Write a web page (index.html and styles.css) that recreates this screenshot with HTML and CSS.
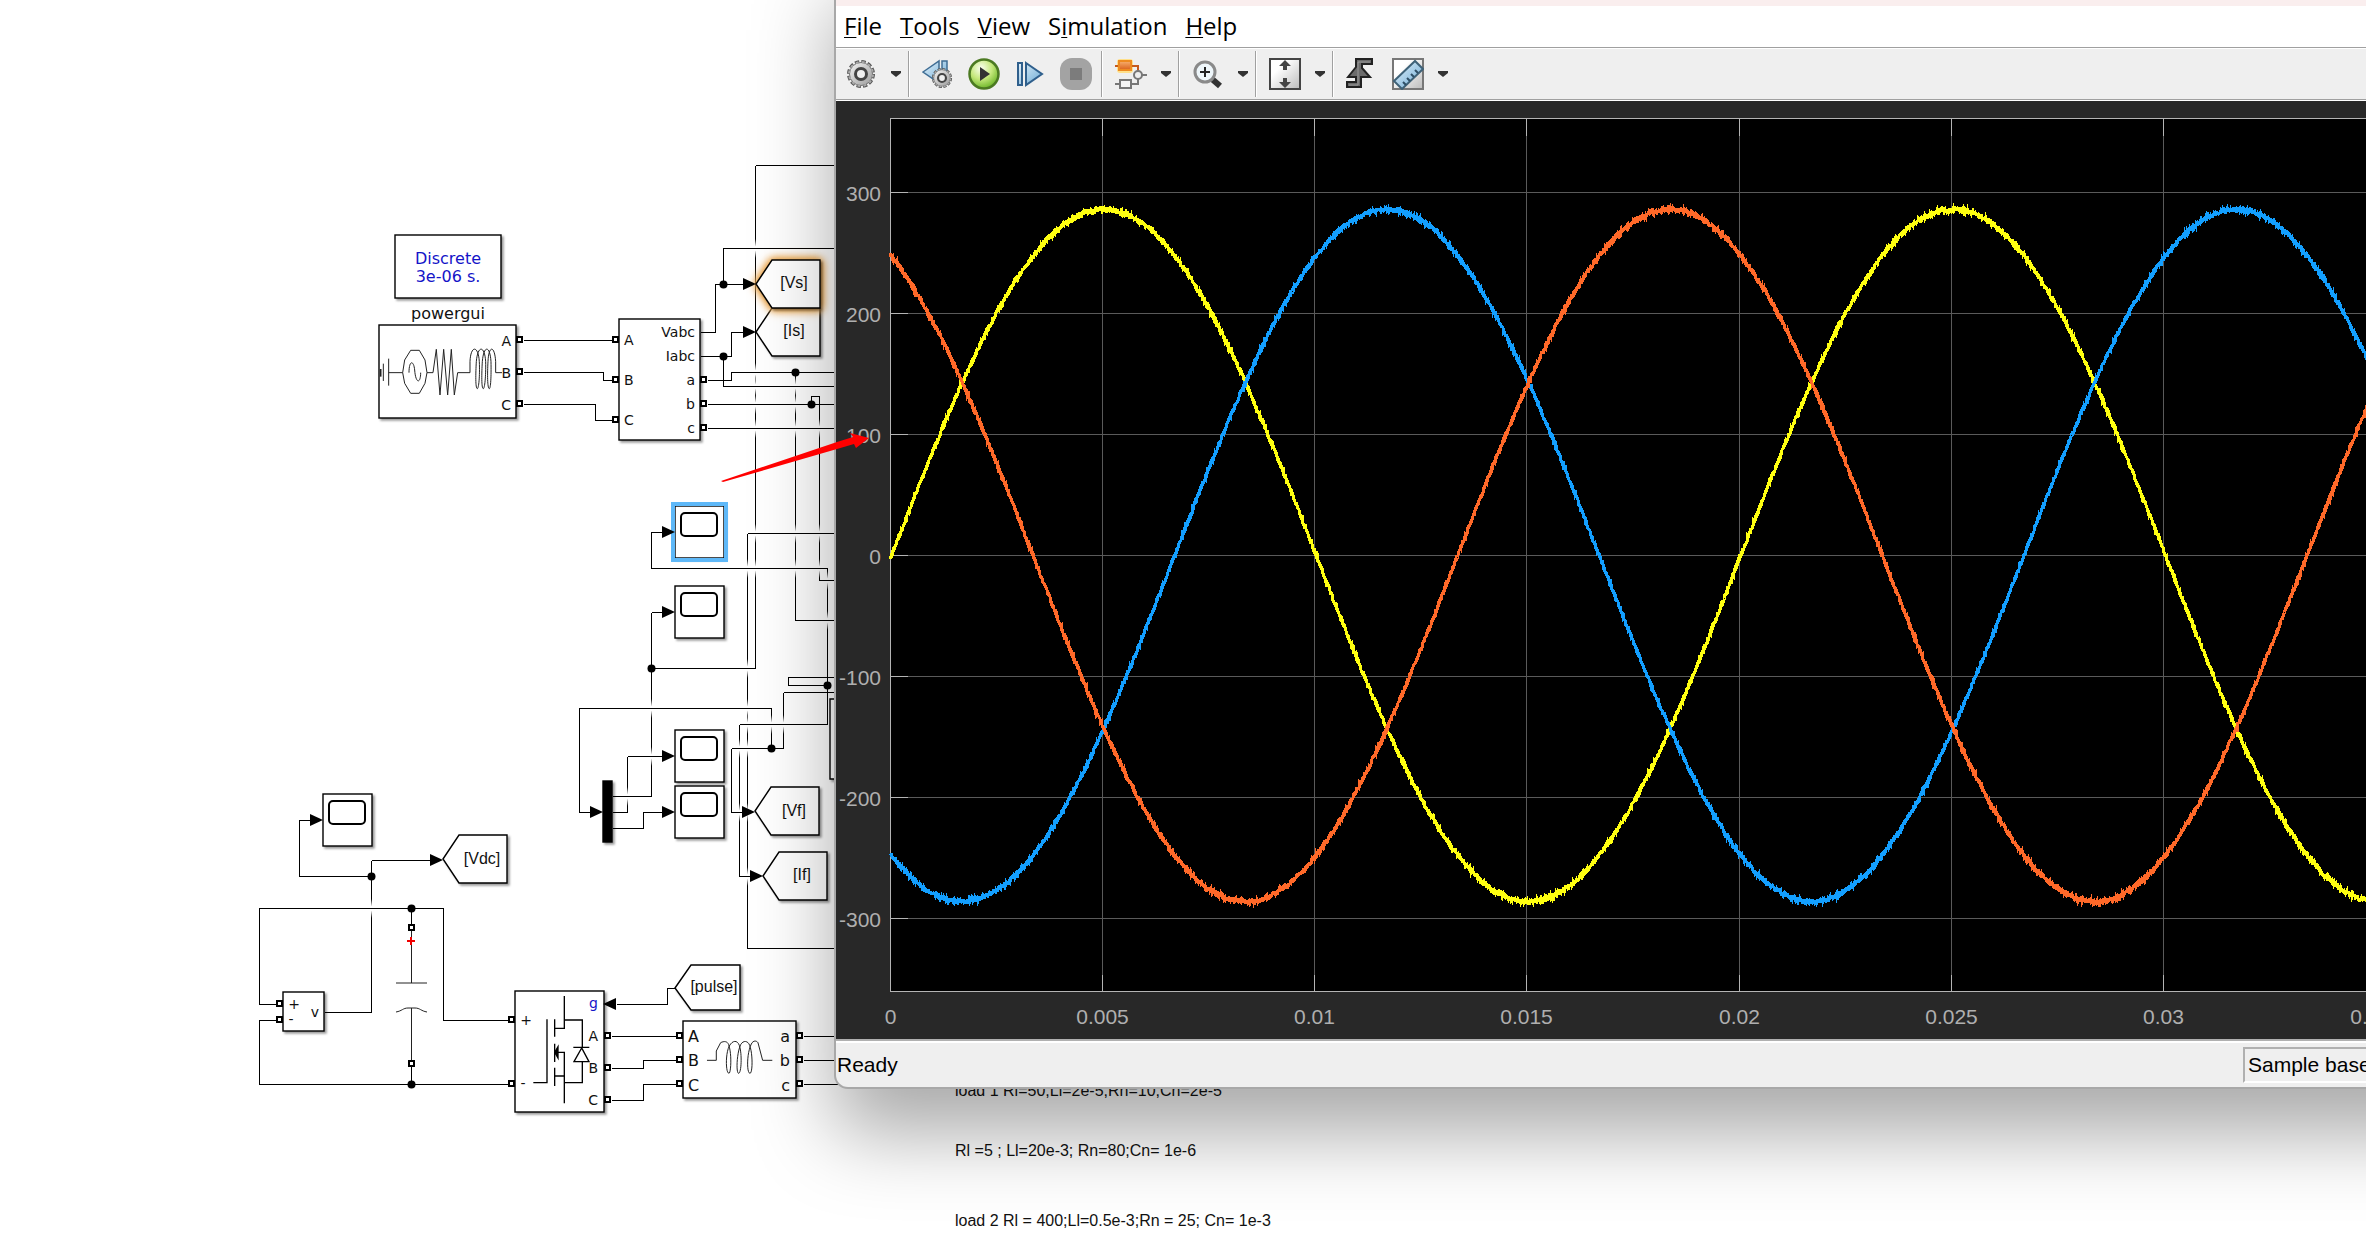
FILE: index.html
```html
<!DOCTYPE html>
<html lang="en">
<head>
    <meta charset="UTF-8">
    <meta name="viewport" content="width=device-width, initial-scale=1.0">
    <title>Scope</title>
    <link rel="stylesheet" href="styles.css">
</head>
<body>
    <main class="model">
        <svg class="diagram" role="img" aria-label="Inverter model">
            <defs>
                <linearGradient id="fade" x1="0" y1="0" x2="0" y2="1">
                    <stop offset="0" stop-color="#fff" stop-opacity="0"/>
                    <stop offset=".4" stop-color="#fff"/>
                    <stop offset=".6" stop-color="#fff"/>
                    <stop offset="1" stop-color="#fff" stop-opacity="0"/>
                </linearGradient>
                <rect id="gap" x="-1" y="-9" width="3" height="19" fill="url(#fade)"/>
                <rect id="port" x="-2.5" y="-2.5" width="5" height="5" class="port"/>
                <circle id="node" r="4"/>
                <path id="arrow" d="M0 0L-13 -6V6Z"/>
                <path id="tag" class="block" d="M0 0L16 -24H64V24H16Z"/>
                <g id="scope">
                    <rect class="block" width="49" height="52"/>
                    <rect class="screen" x="6" y="7" width="36" height="23" rx="4"/>
                </g>
            </defs>

            <!-- vertical runs of the wires -->
            <g class="wire">
                <path d="M755 165V668M747 533V948M795 372V620M819 396V580M827 568V724M739 724V876M783 692V748M771 708V748M731 748V812M651 612V796M627 756V812M371 860V1012"/>
            </g>
            <g>
                <use href="#gap" x="755" y="248"/><use href="#gap" x="755" y="372"/><use href="#gap" x="755" y="386"/>
                <use href="#gap" x="755" y="404"/><use href="#gap" x="755" y="428"/><use href="#gap" x="755" y="533"/>
                <use href="#gap" x="755" y="568"/><use href="#gap" x="747" y="568"/><use href="#gap" x="747" y="668"/>
                <use href="#gap" x="747" y="708"/><use href="#gap" x="747" y="724"/><use href="#gap" x="747" y="748"/>
                <use href="#gap" x="747" y="812"/><use href="#gap" x="747" y="876"/><use href="#gap" x="795" y="386"/>
                <use href="#gap" x="795" y="404"/><use href="#gap" x="795" y="428"/><use href="#gap" x="795" y="533"/>
                <use href="#gap" x="795" y="568"/><use href="#gap" x="819" y="428"/><use href="#gap" x="819" y="533"/>
                <use href="#gap" x="819" y="568"/><use href="#gap" x="827" y="580"/><use href="#gap" x="827" y="620"/>
                <use href="#gap" x="783" y="724"/><use href="#gap" x="771" y="724"/><use href="#gap" x="739" y="748"/>
                <use href="#gap" x="739" y="812"/><use href="#gap" x="651" y="708"/><use href="#gap" x="651" y="756"/>
                <use href="#gap" x="627" y="796"/><use href="#gap" x="371" y="908"/>
            </g>

            <!-- the rest of the wires -->
            <g class="wire">
                <path d="M523 340H612M523 372H603V380H612M523 404H595V420H612"/>
                <path d="M700 332H715V284H745M723 284V248H836M700 356H731V332H745M723 356V386H836"/>
                <path d="M707 380H731V372H836M707 404H836M811 404V396H819M707 428H836"/>
                <path d="M755 165H836M651 668H755M747 533H836M795 620H836M819 580H836M747 948H836"/>
                <path d="M664 532H651V568H827M664 612H651M836 677H788V685H827M836 692H783"/>
                <path d="M827 724H739M739 876H752M783 748H731M731 812H744M771 708H579V812H592"/>
                <path d="M612 796H651M612 812H627M627 756H664M612 828H643V812H664"/>
                <path d="M312 820H299V876H371M371 860H432M371 1012H324"/>
                <path d="M276 1004H259V908H443V1020H508M276 1020H259V1084H508M411 908V924M411 1066V1084"/>
                <path d="M611 1036H676M611 1068H643V1060H676M611 1100H643V1084H676M616 1004H667V988H675"/>
                <path d="M803 1036H836M803 1060H836M803 1084H844"/>
            </g>

            <!-- solver and three-phase source -->
            <rect class="block" x="395" y="235" width="106" height="63"/>
            <text class="label label-big blue middle" x="448" y="264">Discrete</text>
            <text class="label label-big blue middle" x="448" y="282">3e-06 s.</text>
            <text class="label label-big middle" x="448" y="319">powergui</text>
            <rect class="block" x="379" y="325" width="137" height="93"/>
            <g class="art" transform="translate(360 220) scale(.3333)">
                <path d="M62 447V470" stroke-width="5"/>
                <path d="M70 431V483M86 416V497M86 458H128L134 420L152 391H178L195 420L201 458L195 490L178 520H152L134 490L128 458"/>
                <path d="M147 458C147 420 161 420 164 450C167 492 182 492 182 458"/>
                <path d="M201 458H219L229 388L240 525L251 388L263 525L274 388L283 525L293 458H330V425C332 375 355 375 358 425C360 470 356 506 352 506C346 506 347 460 349 425C353 375 374 375 377 425C378 470 374 506 370 506C364 506 365 460 367 425C371 375 390 375 393 425C394 470 392 506 388 506C382 506 382 460 384 425C386 375 404 375 407 425V458H426"/>
            </g>
            <g class="label end">
                <text x="511" y="346">A</text><text x="511" y="378">B</text><text x="511" y="410">C</text>
            </g>

            <!-- measurement -->
            <rect class="block" x="619" y="319" width="81" height="121"/>
            <g class="label">
                <text x="624" y="345">A</text><text x="624" y="385">B</text><text x="624" y="425">C</text>
            </g>
            <g class="label end">
                <text x="695" y="337">Vabc</text><text x="695" y="361">Iabc</text>
                <text x="695" y="385">a</text><text x="695" y="409">b</text><text x="695" y="433">c</text>
            </g>

            <!-- goto tags -->
            <use href="#tag" x="756" y="332"/>
            <use href="#tag" class="glow" x="756" y="284"/>
            <use href="#tag" x="755" y="811"/>
            <use href="#tag" x="763" y="876"/>
            <use href="#tag" x="443" y="859"/>
            <path class="block" d="M675 988L691 965H740V1010H691Z"/>
            <g class="tag-text middle">
                <text x="794" y="288">[Vs]</text><text x="794" y="336">[Is]</text><text x="794" y="816">[Vf]</text>
                <text x="802" y="880">[If]</text><text x="482" y="864">[Vdc]</text><text x="714" y="992">[pulse]</text>
            </g>

            <!-- scopes and demux -->
            <use href="#scope" x="675" y="506"/>
            <rect class="selection" x="673" y="504" width="53" height="56"/>
            <use href="#scope" x="675" y="586"/>
            <use href="#scope" x="675" y="730"/>
            <use href="#scope" x="675" y="786"/>
            <use href="#scope" x="323" y="794"/>
            <rect class="block mux" x="603" y="781" width="9" height="61"/>
            <path class="block" d="M840 699H830V779H840"/>

            <!-- voltage sensor and capacitor -->
            <rect class="block" x="283" y="992" width="41" height="39"/>
            <g class="label middle">
                <text x="294" y="1009">+</text><text x="291" y="1024">-</text><text x="315" y="1017">v</text>
            </g>
            <path class="art" d="M411.5 931V983M396 983H427M411.5 1008V1060M396 1012C402 1011 403 1008 408 1008H415C420 1008 421 1011 427 1012"/>
            <path class="plus" d="M407 941H415M411 937V945"/>

            <!-- bridge -->
            <rect class="block" x="515" y="991" width="89" height="121"/>
            <g class="art mosfet" transform="translate(490 940) scale(.3333)">
                <path d="M223 168V265H194M194 238V290M194 311V366M194 383V438M171 238V428H130M194 337H223V490M194 408H223M223 240H277V322M250 322H298M277 365V428H223M275 324L252 365H297Z"/>
                <path d="M194 337L204 320V354Z" fill="#000"/>
            </g>
            <g class="label middle"><text x="526" y="1025">+</text><text x="523" y="1088">-</text></g>
            <g class="label end">
                <text class="blue" x="598" y="1008">g</text>
                <text x="598" y="1041">A</text><text x="598" y="1073">B</text><text x="598" y="1105">C</text>
            </g>

            <!-- filter coil -->
            <rect class="block" x="683" y="1021" width="113" height="77"/>
            <g class="art" transform="translate(490 940) scale(.3333)">
                <path d="M651 361H679V333L692 308C702 303 712 303 716 314C726 340 723 400 717 400C707 400 706 340 718 318C728 300 742 300 748 316C757 342 754 400 746 400C738 400 740 340 752 314C760 300 774 302 779 316C789 342 788 400 780 400C770 400 770 340 784 312C790 300 800 302 804 308L818 361H847"/>
            </g>
            <g class="label label-big">
                <text x="688" y="1042">A</text><text x="688" y="1066">B</text><text x="688" y="1091">C</text>
            </g>
            <g class="label label-big end">
                <text x="790" y="1042">a</text><text x="790" y="1066">b</text><text x="790" y="1091">c</text>
            </g>

            <g>
                <use href="#port" x="519.5" y="339.5"/><use href="#port" x="519.5" y="371.5"/><use href="#port" x="519.5" y="403.5"/>
                <use href="#port" x="615.5" y="339.5"/><use href="#port" x="615.5" y="379.5"/><use href="#port" x="615.5" y="419.5"/>
                <use href="#port" x="703.5" y="379.5"/><use href="#port" x="703.5" y="403.5"/><use href="#port" x="703.5" y="427.5"/>
                <use href="#port" x="279.5" y="1003.5"/><use href="#port" x="279.5" y="1019.5"/>
                <use href="#port" x="411.5" y="927.5"/><use href="#port" x="411.5" y="1063.5"/>
                <use href="#port" x="511.5" y="1019.5"/><use href="#port" x="511.5" y="1083.5"/>
                <use href="#port" x="607.5" y="1035.5"/><use href="#port" x="607.5" y="1067.5"/><use href="#port" x="607.5" y="1099.5"/>
                <use href="#port" x="679.5" y="1035.5"/><use href="#port" x="679.5" y="1059.5"/><use href="#port" x="679.5" y="1083.5"/>
                <use href="#port" x="799.5" y="1035.5"/><use href="#port" x="799.5" y="1059.5"/><use href="#port" x="799.5" y="1083.5"/>
            </g>
            <g>
                <use href="#node" x="723.5" y="284.5"/><use href="#node" x="723.5" y="356.5"/><use href="#node" x="795.5" y="372.5"/>
                <use href="#node" x="811.5" y="404.5"/><use href="#node" x="651.5" y="668.5"/><use href="#node" x="827.5" y="685.5"/>
                <use href="#node" x="771.5" y="748.5"/><use href="#node" x="371.5" y="876.5"/>
                <use href="#node" x="411.5" y="908.5"/><use href="#node" x="411.5" y="1084.5"/>
            </g>
            <g>
                <use href="#arrow" x="756" y="284"/><use href="#arrow" x="756" y="332"/>
                <use href="#arrow" x="675" y="532"/><use href="#arrow" x="675" y="612"/>
                <use href="#arrow" x="675" y="756"/><use href="#arrow" x="675" y="812"/>
                <use href="#arrow" x="603" y="812"/><use href="#arrow" x="755" y="812"/>
                <use href="#arrow" x="763" y="876"/><use href="#arrow" x="323" y="820"/><use href="#arrow" x="443" y="860"/>
                <path d="M603 1004L616 998V1010Z"/>
            </g>

            <g class="tag-text">
                <text x="955" y="1096">load 1 Rl=50;Ll=2e-5;Rn=10;Cn=2e-5</text>
                <text x="955" y="1156">Rl =5 ; Ll=20e-3; Rn=80;Cn= 1e-6</text>
                <text x="955" y="1226">load 2 Rl = 400;Ll=0.5e-3;Rn = 25; Cn= 1e-3</text>
            </g>
        </svg>
    </main>

    <section class="window">
        <div class="titlebar"></div>
        <nav class="menubar">
            <button type="button"><u>F</u>ile</button>
            <button type="button"><u>T</u>ools</button>
            <button type="button"><u>V</u>iew</button>
            <button type="button">S<u>i</u>mulation</button>
            <button type="button"><u>H</u>elp</button>
        </nav>
        <div class="toolbar">
            <svg class="defs" aria-hidden="true">
                <defs>
                    <linearGradient id="metal" x1="0" y1="0" x2="1" y2="1"><stop offset="0" stop-color="#f4f4f4"/><stop offset="1" stop-color="#9a9a9a"/></linearGradient>
                    <linearGradient id="blue" x1="0" y1="0" x2="1" y2="1"><stop offset="0" stop-color="#e4f2fb"/><stop offset="1" stop-color="#6aa9d4"/></linearGradient>
                    <linearGradient id="paper" x1="0" y1="0" x2="1" y2="1"><stop offset=".3" stop-color="#fff"/><stop offset="1" stop-color="#bbb"/></linearGradient>
                    <linearGradient id="orange" x1="0" y1="0" x2="0" y2="1"><stop offset="0" stop-color="#f8b070"/><stop offset="1" stop-color="#d9601a"/></linearGradient>
                    <radialGradient id="green" cx=".4" cy=".3" r=".75"><stop offset="0" stop-color="#fbfff0"/><stop offset=".5" stop-color="#c5e87c"/><stop offset="1" stop-color="#62b01e"/></radialGradient>
                    <g id="cog">
                        <circle r="12" fill="none" stroke="#555" stroke-width="4" stroke-dasharray="4.2 2.08"/>
                        <circle r="11.5" fill="url(#metal)" stroke="#777"/>
                        <circle r="12" fill="none" stroke="#aaa" stroke-width="2" stroke-dasharray="2.6 3.68" stroke-dashoffset="-.8"/>
                        <circle r="5.5" fill="#efefef" stroke="#444" stroke-width="3"/>
                    </g>
                    <path id="caret" d="M0 0H10V2L5 6L0 2Z" fill="#333"/>
                </defs>
            </svg>
            <button type="button" class="tool" aria-label="Settings">
                <svg viewBox="0 0 32 32"><use href="#cog" x="16" y="16"/></svg>
            </button>
            <button type="button" class="caret" aria-label="More"><svg viewBox="0 0 10 6"><use href="#caret"/></svg></button>
            <span class="sep"></span>
            <div class="group">
                <button type="button" class="tool" aria-label="Step back">
                    <svg viewBox="0 0 32 32">
                        <path d="M1 14L17 3V25Z M20 3H25V16H20Z" fill="url(#blue)" stroke="#3f6d94" stroke-width="1.5"/>
                        <g transform="translate(20 20) scale(.72)"><use href="#cog"/></g>
                    </svg>
                </button>
                <button type="button" class="tool" aria-label="Run">
                    <svg viewBox="0 0 32 32">
                        <circle cx="16" cy="16" r="14.5" fill="url(#green)" stroke="#4c7a22" stroke-width="2.5"/>
                        <path d="M12 9L22 16L12 23Z" fill="#333"/>
                    </svg>
                </button>
                <button type="button" class="tool" aria-label="Step forward">
                    <svg viewBox="0 0 32 32"><path d="M4 5H8V27H4Z M12 5L28 16L12 27Z" fill="url(#blue)" stroke="#2f5f8c" stroke-width="2"/></svg>
                </button>
                <button type="button" class="tool" aria-label="Stop">
                    <svg viewBox="0 0 32 32"><rect width="32" height="32" rx="12" fill="#a3a3a3"/><rect x="10" y="10" width="12" height="12" fill="#7c7c7c"/></svg>
                </button>
            </div>
            <span class="sep"></span>
            <button type="button" class="tool" aria-label="Highlight block">
                <svg viewBox="0 0 32 32">
                    <rect x="2" y="1" width="16" height="14" rx="3" fill="#ffe08a"/>
                    <path d="M0 8H5M15 8H23V13" fill="none" stroke="#c65a1c" stroke-width="2"/>
                    <path d="M0 26H5M15 26H23V21M26 17H32" fill="none" stroke="#777" stroke-width="2"/>
                    <rect x="4" y="3" width="12" height="9" fill="url(#orange)" stroke="#ee8a20" stroke-width="2"/>
                    <rect x="5" y="22" width="11" height="8" fill="#f4f4f4" stroke="#777" stroke-width="2"/>
                    <circle cx="23" cy="17" r="4" fill="#eee" stroke="#777" stroke-width="2"/>
                </svg>
            </button>
            <button type="button" class="caret" aria-label="More"><svg viewBox="0 0 10 6"><use href="#caret"/></svg></button>
            <span class="sep"></span>
            <button type="button" class="tool" aria-label="Zoom">
                <svg viewBox="0 0 32 32">
                    <path d="M20 21L28 28" stroke="#333" stroke-width="6"/>
                    <circle cx="13" cy="14" r="10" fill="#eef6fa" stroke="#8a8a8a" stroke-width="3"/>
                    <path d="M8 14H18M13 9V19" stroke="#222" stroke-width="2"/>
                </svg>
            </button>
            <button type="button" class="caret" aria-label="More"><svg viewBox="0 0 10 6"><use href="#caret"/></svg></button>
            <span class="sep"></span>
            <button type="button" class="tool" aria-label="Scale axes">
                <svg viewBox="0 0 32 32">
                    <rect x="1" y="1" width="30" height="30" fill="url(#paper)" stroke="#444" stroke-width="2"/>
                    <path d="M16 2L22 8H18V12H14V8H10ZM16 30L22 24H18V20H14V24H10Z" fill="#444"/>
                </svg>
            </button>
            <button type="button" class="caret" aria-label="More"><svg viewBox="0 0 10 6"><use href="#caret"/></svg></button>
            <span class="sep"></span>
            <button type="button" class="tool" aria-label="Triggers">
                <svg viewBox="0 0 32 32">
                    <path d="M1 24H10V19H2L10 9V1H26V6H16V10L24 19H15V29H1Z" fill="#6b6b6b" stroke="#222" stroke-width="2"/>
                    <path d="M3 27H12V4H24" fill="none" stroke="#999" stroke-width="1"/>
                </svg>
            </button>
            <button type="button" class="tool" aria-label="Measurements">
                <svg viewBox="0 0 32 32">
                    <rect x="1" y="1" width="30" height="30" fill="url(#paper)" stroke="#777" stroke-width="2"/>
                    <path d="M2 23L23 3L31 11L10 31Z" fill="url(#blue)" stroke="#3f6278" stroke-width="2"/>
                    <path d="M14 27L11 24M18 23L15 20M22 19L19 16M26 15L23 12" stroke="#2f4f66" stroke-width="2"/>
                </svg>
            </button>
            <button type="button" class="caret" aria-label="More"><svg viewBox="0 0 10 6"><use href="#caret"/></svg></button>
        </div>
        <svg class="plot" id="plot" role="img" aria-label="Three-phase voltage"></svg>
        <footer class="statusbar">
            <span class="status">Ready</span>
            <span class="mode">Sample based</span>
        </footer>
    </section>

    <svg class="pointer" viewBox="0 0 150 52" aria-hidden="true">
        <path d="M1 49L117 10L133 5L130 1L149 6L136 16L134 12L117 17L3 50Z"/>
    </svg>

    <script src="scope.js"></script>
</body>
</html>
```
FILE: styles.css
```css
body {
    margin: 0;
    position: relative;
    overflow: hidden;
    background: #fff;
    font-family: "Liberation Sans", Arial, sans-serif;
}
button {
    border: none;
    padding: 0;
    background: none;
    color: inherit;
    font: inherit;
}

/* model canvas */
.diagram {
    display: block;
    width: 100%;
    height: 1238px;
}
.wire {
    fill: none;
    stroke: #000;
    stroke-width: 1;
    shape-rendering: crispEdges;
    transform: translate(0.5px, 0.5px);
}
.block {
    fill: #fff;
    stroke: #000;
    stroke-width: 1.4;
    filter: drop-shadow(2px 2px 1px rgba(0, 0, 0, 0.4));
}
.mux {
    fill: #000;
}
.glow {
    filter: drop-shadow(0 0 4px #e8a040) drop-shadow(0 0 3px #f0b060);
}
.screen {
    fill: #fff;
    stroke: #000;
    stroke-width: 2;
}
.selection {
    fill: none;
    stroke: #5eb8f8;
    stroke-width: 4;
}
.port {
    fill: #fff;
    stroke: #000;
    stroke-width: 2;
}
.art {
    fill: none;
    stroke: #222;
    stroke-width: 1;
}
g.art {
    stroke-width: 3;
}
g.mosfet {
    stroke: #000;
    stroke-width: 4;
}
.plus {
    stroke: #f00000;
    stroke-width: 2;
}
.label {
    font-family: "DejaVu Sans", Verdana, sans-serif;
    font-size: 14px;
    fill: #111;
}
.label-big {
    font-size: 16px;
}
.blue {
    fill: #1414c8;
}
.tag-text {
    font-size: 16px;
    fill: #111;
}
.middle {
    text-anchor: middle;
}
.end {
    text-anchor: end;
}

/* scope window, its title bar and right side run off the screen */
.window {
    position: absolute;
    top: -40px;
    left: 834px;
    right: -120px;
    border: 2px solid #a8a8a8;
    border-top: none;
    border-radius: 0 0 0 14px;
    overflow: hidden;
    background: #efefef;
    box-shadow: 0 44px 80px rgba(0, 0, 0, 0.34);
}
.titlebar {
    height: 46px;
    background: #faeeee;
}
.menubar {
    display: flex;
    align-items: center;
    gap: 18px;
    height: 41px;
    padding-left: 8px;
    border-bottom: 1px solid #a0a0a0;
    background: #fff;
    color: #000;
    font-family: "Open Sans", "Noto Sans", sans-serif;
    font-size: 24px;
    line-height: 40px;
}
.menubar button {
    padding-bottom: 2px;
}
.menubar u {
    text-decoration-thickness: 1px;
    text-underline-offset: 2px;
}
.toolbar {
    display: flex;
    align-items: center;
    height: 50px;
    padding-left: 2px;
    border-top: 1px solid #fff;
    border-bottom: 1px solid #a0a0a0;
}
.defs {
    position: absolute;
    width: 0;
    height: 0;
}
.group {
    display: flex;
    padding-right: 2px;
}
.tool {
    width: 46px;
    height: 46px;
    display: flex;
    align-items: center;
    justify-content: center;
}
.tool svg {
    width: 32px;
    height: 32px;
}
.caret {
    width: 24px;
    height: 46px;
    display: flex;
    align-items: center;
    justify-content: center;
}
.caret svg {
    width: 10px;
    height: 6px;
}
.sep {
    width: 1px;
    height: 46px;
    margin-right: 5px;
    background: #a0a0a0;
    border-right: 1px solid #fff;
}

.plot {
    display: block;
    width: 100%;
    height: 938px;
    border-top: 1px solid #fff;
    background: #282828;
}
.plot-area {
    fill: #000;
    stroke: #b4b4b4;
}
.grid {
    stroke: #5a5a5a;
    shape-rendering: crispEdges;
}
.tick {
    stroke: #b4b4b4;
    shape-rendering: crispEdges;
}
.axis-label {
    fill: #afafaf;
    font-size: 21px;
}
.trace {
    fill: none;
    stroke-width: 3;
    stroke-linejoin: miter;
    shape-rendering: crispEdges;
}

.statusbar {
    display: flex;
    align-items: center;
    justify-content: space-between;
    height: 44px;
    border-top: 2px solid #b0b0b0;
    box-shadow: inset 0 2px #fff;
    padding-top: 2px;
    font-size: 21px;
    color: #000;
}
.status {
    padding-left: 1px;
}
.mode {
    box-sizing: border-box;
    width: 241px;
    height: 36px;
    padding-left: 3px;
    border: 2px solid #b0b0b0;
    border-bottom-color: #fff;
    line-height: 32px;
}

.pointer {
    position: absolute;
    left: 720px;
    top: 432px;
    width: 150px;
    height: 52px;
    fill: #ff0000;
}
```
FILE: scope.js
```js
const plot = document.getElementById('plot');
const left = 54.5, top0 = 17.5, bottom = 890.5, right = 2000;
const zeroY = 454.5, stepY = 121, stepX = 212.33;

function add(name, attrs, text) {
    const el = document.createElementNS('http://www.w3.org/2000/svg', name);
    for (const key in attrs) el.setAttribute(key, attrs[key]);
    if (text !== undefined) el.textContent = text;
    plot.appendChild(el);
}

add('rect', { class: 'plot-area', x: left, y: top0, width: right - left, height: bottom - top0 });

for (let i = -3; i <= 3; i++) {
    const y = zeroY - i * stepY;
    add('path', { class: 'grid', d: `M${left} ${y}H${right}` });
    add('path', { class: 'tick', d: `M${left} ${y}h17` });
    add('text', { class: 'axis-label end', x: 45, y: y + 8.5 }, i * 100);
}
for (let i = 0; i <= 7; i++) {
    const x = Math.round(left + i * stepX) - 0.5;
    if (i > 0) {
        add('path', { class: 'grid', d: `M${x} ${top0}V${bottom}` });
        add('path', { class: 'tick', d: `M${x} ${top0}v17M${x} ${bottom}v-17` });
    }
    add('text', { class: 'axis-label middle', x: x, y: 923 }, i * 5 / 1000);
}

// fixed seed so that the ripple is the same on every load
let seed = 7;
function ripple() {
    seed = (seed * 16807) % 2147483647;
    return (seed / 2147483647 - 0.5) * 4;
}

function trace(color, phase) {
    const period = stepX * 4;
    let d = '';
    for (let x = left; x < right; x += 0.5) {
        const angle = 2 * Math.PI * (x - left - 1) / period + phase;
        const y = zeroY - 2.86 * stepY * Math.sin(angle) + ripple();
        d += (d ? 'L' : 'M') + x + ' ' + y.toFixed(1);
    }
    add('path', { class: 'trace', stroke: color, d: d });
}

trace('#ffff11', 0);
trace('#139fff', -2 * Math.PI / 3);
trace('#ff6929', 2 * Math.PI / 3);
```
